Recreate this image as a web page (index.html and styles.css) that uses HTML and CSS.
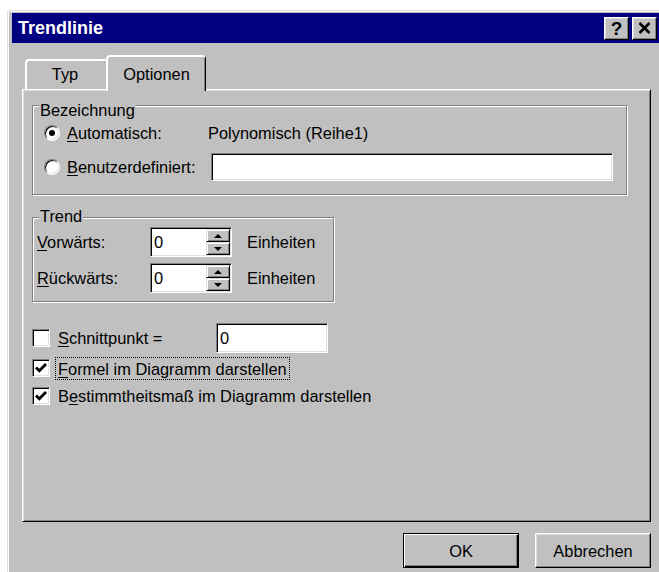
FILE: index.html
```html
<!DOCTYPE html>
<html lang="de">
<head>
<meta charset="utf-8">
<title>Trendlinie</title>
<link rel="stylesheet" href="styles.css">
</head>
<body>
<div class="window">
  <div class="titlebar">
    <span class="title">Trendlinie</span>
    <div class="title-buttons">
      <button class="tbtn help" type="button">?</button>
      <button class="tbtn close" type="button">
        <svg width="13" height="12" viewBox="0 0 13 12"><path d="M1.5 1 L11.5 11 M11.5 1 L1.5 11" stroke="#000" stroke-width="2.6" fill="none"/></svg>
      </button>
    </div>
  </div>

  <div class="client">
    <div class="tabs">
      <div class="tab">Typ</div>
      <div class="tab active">Optionen</div>
    </div>

    <div class="panel">
      <div class="group group-name">
        <div class="group-title">Bezeichnung</div>
        <div class="row name-row">
          <span class="radio checked"></span>
          <span class="lbl lbl-auto"><u>A</u>utomatisch:</span>
          <span>Polynomisch (Reihe1)</span>
        </div>
        <div class="row name-row second">
          <span class="radio"></span>
          <span class="lbl lbl-custom"><u>B</u>enutzerdefiniert:</span>
          <span class="field name-field"></span>
        </div>
      </div>

      <div class="group group-trend">
        <div class="group-title">Trend</div>
        <div class="row trend-row">
          <span class="lbl lbl-trend"><u>V</u>orwärts:</span>
          <span class="field spinner">
            <span class="value">0</span>
            <span class="spin">
              <span class="spin-btn"><svg width="8" height="4" viewBox="0 0 8 4"><polygon points="0,4 4,0 8,4" fill="#000"/></svg></span>
              <span class="spin-btn"><svg width="8" height="4" viewBox="0 0 8 4"><polygon points="0,0 8,0 4,4" fill="#000"/></svg></span>
            </span>
          </span>
          <span class="unit">Einheiten</span>
        </div>
        <div class="row trend-row second">
          <span class="lbl lbl-trend"><u>R</u>ückwärts:</span>
          <span class="field spinner">
            <span class="value">0</span>
            <span class="spin">
              <span class="spin-btn"><svg width="8" height="4" viewBox="0 0 8 4"><polygon points="0,4 4,0 8,4" fill="#000"/></svg></span>
              <span class="spin-btn"><svg width="8" height="4" viewBox="0 0 8 4"><polygon points="0,0 8,0 4,4" fill="#000"/></svg></span>
            </span>
          </span>
          <span class="unit">Einheiten</span>
        </div>
      </div>

      <div class="checks">
        <div class="row check-row intercept">
          <span class="checkbox"></span>
          <span class="lbl lbl-intercept"><u>S</u>chnittpunkt =</span>
          <span class="field intercept-field"><span class="value">0</span></span>
        </div>
        <div class="row check-row formula">
          <span class="checkbox checked">
            <svg width="16" height="16" viewBox="0 0 16 16"><polyline points="3,7.5 6.3,10.8 13,4" stroke="#000" stroke-width="2.8" fill="none"/></svg>
          </span>
          <span class="lbl focus"><u>F</u>ormel im Diagramm darstellen</span>
        </div>
        <div class="row check-row rsq">
          <span class="checkbox checked">
            <svg width="16" height="16" viewBox="0 0 16 16"><polyline points="3,7.5 6.3,10.8 13,4" stroke="#000" stroke-width="2.8" fill="none"/></svg>
          </span>
          <span class="lbl">B<u>e</u>stimmtheitsmaß im Diagramm darstellen</span>
        </div>
      </div>
    </div>

    <div class="buttons">
      <button class="btn default" type="button">OK</button>
      <button class="btn" type="button">Abbrechen</button>
    </div>
  </div>
</div>
</body>
</html>
```

FILE: styles.css
```css
html, body {
  margin: 0;
  padding: 0;
  overflow: hidden;
}

body {
  width: 659px;
  height: 572px;
  background: #fff;
  color: #000;
  font-family: "Liberation Sans", Arial, sans-serif;
  font-size: 16.4px;
  line-height: 18px;
}

u {
  text-decoration: underline;
  text-underline-offset: 2px;
}

/* dialog frame */
.window {
  margin: 10px 0 0 7px;
  width: 664px;
  height: 580px;
  box-sizing: border-box;
  padding: 2px 0 0 4px;
  background: #c0c0c0;
  border-top: 1px solid #dfdfdf;
  border-left: 1px solid #dfdfdf;
  box-shadow: inset 1px 1px #fff;
}

.titlebar {
  width: 648px;
  height: 30px;
  box-sizing: border-box;
  padding: 0 3px 0 6px;
  background: #000080;
  display: flex;
  align-items: center;
  justify-content: space-between;
}

.title {
  color: #fff;
  font-weight: bold;
  font-size: 18px;
  line-height: 20px;
}

.title-buttons {
  display: flex;
  gap: 3px;
}

.tbtn {
  width: 25px;
  height: 23px;
  box-sizing: border-box;
  padding: 0;
  margin: 0;
  background: #c0c0c0;
  border: 1px solid;
  border-color: #fff #000 #000 #fff;
  box-shadow: inset -1px -1px #808080, inset 1px 1px #dfdfdf;
  display: flex;
  align-items: center;
  justify-content: center;
  font-family: "Liberation Sans", Arial, sans-serif;
  font-weight: bold;
  font-size: 19px;
  line-height: 19px;
  color: #000;
}

/* client area */
.client {
  width: 629px;
  padding-left: 10px;
}

.tabs {
  margin-top: 12px;
  height: 34px;
  padding-left: 3px;
  display: flex;
  align-items: flex-end;
}

.tab {
  box-sizing: border-box;
  height: 30px;
  width: 83px;
  padding: 4px 4px 0 0;
  text-align: center;
  background: #c0c0c0;
  border-top: 2px solid #fff;
  border-left: 2px solid #fff;
  border-right: 1px solid #000;
  border-radius: 4px 4px 0 0;
  box-shadow: inset -1px 0 #808080;
}

.tab.active {
  position: relative;
  z-index: 1;
  width: 100px;
  height: 36px;
  margin-left: -2px;
  margin-bottom: -2px;
  padding: 8px 0 0 0;
}

.panel {
  box-sizing: border-box;
  width: 629px;
  height: 433px;
  padding: 15px 0 0 9px;
  background: #c0c0c0;
  border: 1px solid;
  border-color: #fff #000 #000 #fff;
  box-shadow: inset 1px 1px #dfdfdf, inset -1px -1px #808080;
}

/* group boxes */
.group {
  border: 1px solid #808080;
  box-shadow: inset 1px 1px #fff, 1px 1px #fff;
}

.group-title {
  width: max-content;
  padding: 0 1px;
  margin-left: 6px;
  background: #c0c0c0;
}

.group-name {
  width: 595px;
  box-sizing: border-box;
  padding-bottom: 13px;
}

.group-name .group-title {
  margin-top: -5px;
}

.group-trend {
  width: 302px;
  box-sizing: border-box;
  margin-top: 22px;
  padding-bottom: 8px;
}

.group-trend .group-title {
  margin-top: -11px;
}

.row {
  display: flex;
  align-items: center;
  white-space: nowrap;
}

.name-row {
  height: 28px;
}

.name-row.second {
  margin-top: 6px;
}

.radio {
  flex: none;
  width: 16px;
  height: 16px;
  box-sizing: border-box;
  margin-left: 11px;
  border-radius: 50%;
  border: 1px solid;
  border-color: #808080 #fff #fff #808080;
  background: #fff;
  box-shadow: inset 1px 1px #000, inset -1px -1px #dfdfdf;
  display: flex;
  align-items: center;
  justify-content: center;
}

.radio.checked::after {
  content: "";
  width: 6px;
  height: 6px;
  border-radius: 50%;
  background: #000;
}

.lbl-auto {
  margin-left: 7px;
  width: 141px;
}

.lbl-custom {
  margin-left: 7px;
  width: 144px;
}

/* sunken edit fields */
.field {
  box-sizing: border-box;
  background: #fff;
  border: 1px solid;
  border-color: #808080 #fff #fff #808080;
  box-shadow: inset 1px 1px #000, inset -1px -1px #dfdfdf;
  display: flex;
  align-items: center;
}

.field .value {
  padding-left: 3px;
}

.name-field {
  width: 402px;
  height: 28px;
}

.trend-row {
  height: 30px;
  margin-top: 2px;
}

.trend-row.second {
  margin-top: 6px;
}

.lbl-trend {
  margin-left: 4px;
  width: 113px;
}

.spinner {
  width: 82px;
  height: 30px;
}

.spin {
  margin: 1px 1px 1px auto;
  width: 24px;
  height: 26px;
  display: flex;
  flex-direction: column;
}

.spin-btn {
  flex: 1;
  box-sizing: border-box;
  background: #c0c0c0;
  border: 1px solid;
  border-color: #dfdfdf #000 #000 #dfdfdf;
  box-shadow: inset 1px 1px #fff, inset -1px -1px #808080;
  display: flex;
  align-items: center;
  justify-content: center;
}

.unit {
  margin-left: 15px;
}

/* check boxes */
.checks {
  margin-top: 21px;
}

.check-row {
  height: 24px;
}

.check-row.intercept {
  height: 30px;
}

.check-row.formula {
  margin-top: 3px;
}

.check-row.rsq {
  margin-top: 4px;
}

.checkbox {
  flex: none;
  width: 18px;
  height: 18px;
  box-sizing: border-box;
  background: #fff;
  border: 1px solid;
  border-color: #808080 #fff #fff #808080;
  box-shadow: inset 1px 1px #000, inset -1px -1px #dfdfdf;
  display: flex;
}

.check-row .lbl {
  margin-left: 8px;
}

.check-row .lbl-intercept {
  width: 158px;
}

.check-row .lbl.focus {
  margin-left: 5px;
  padding: 2px 2px 1px;
  border: 1px dotted #000;
}

.intercept-field {
  width: 112px;
  height: 30px;
}

/* dialog buttons */
.buttons {
  margin-top: 11px;
  display: flex;
  justify-content: flex-end;
  gap: 16px;
}

.btn {
  width: 116px;
  height: 35px;
  box-sizing: border-box;
  margin: 0;
  padding: 0;
  font: inherit;
  color: #000;
  background: #c0c0c0;
  border: 1px solid;
  border-color: #fff #000 #000 #fff;
  box-shadow: inset -1px -1px #808080, inset 1px 1px #dfdfdf;
}

.btn.default {
  border-color: #000;
  box-shadow: inset 1px 1px #fff, inset -1px -1px #000, inset -2px -2px #808080;
}
```
